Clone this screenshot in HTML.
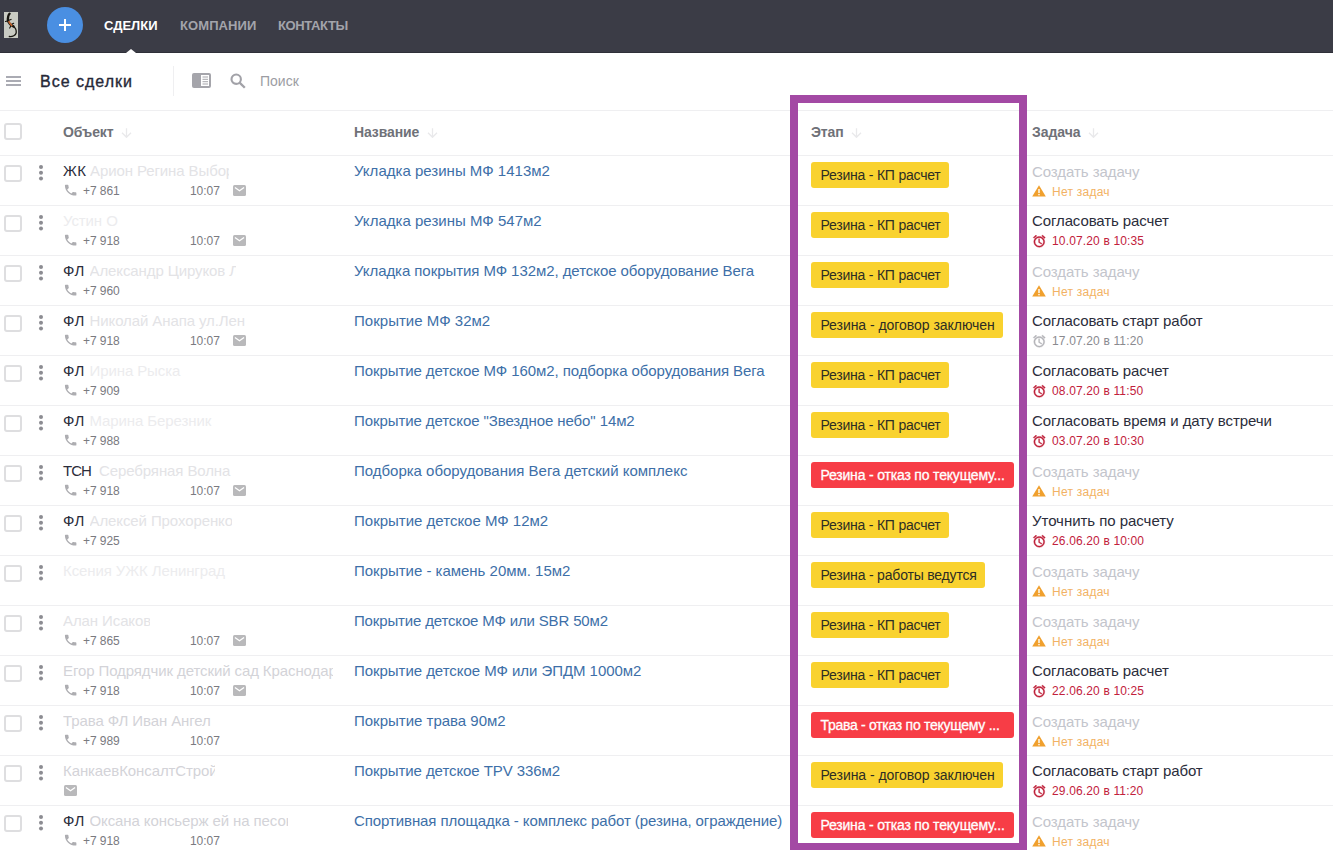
<!DOCTYPE html>
<html lang="ru"><head><meta charset="utf-8"><title>Все сделки</title>
<style>
html,body{margin:0;padding:0;background:#fff}
body{width:1333px;height:854px;position:relative;overflow:hidden;font-family:"Liberation Sans", sans-serif;color:#2b2d3b}
.t{position:absolute;white-space:nowrap;line-height:20px}
.ic{position:absolute;display:block}
.s12{font-size:12px}.s13{font-size:13px}.s14{font-size:14px}.s15{font-size:15px}.s16{font-size:16px}
.b{font-weight:bold}
.topbar{position:absolute;left:0;top:0;width:1333px;height:52px;background:#3b3c46;border-bottom:1px solid #2f3039}
.plus{position:absolute;left:47px;top:7px;width:36px;height:36px;border-radius:50%;background:#4a8fe2}
.plus:before{content:"";position:absolute;left:11.800px;top:17.100px;width:12px;height:2.200px;background:#fff}
.plus:after{content:"";position:absolute;left:16.700px;top:12.200px;width:2.200px;height:12px;background:#fff}
.tri{position:absolute;left:125.500px;top:48.700px;width:0;height:0;border-left:5.500px solid transparent;border-right:5.500px solid transparent;border-bottom:4.300px solid #fff}
.nav{color:#a3a4ab;font-weight:bold}
.nav.act{color:#fff}
.hl{position:absolute;left:0;width:1333px;height:1px;background:#efeff1}
.cb{position:absolute;left:4px;width:13.500px;height:13.300px;border:2px solid #dedee0;border-radius:3px;background:#fff}
.dots{position:absolute;left:39.100px;width:4.300px;height:4.300px;border-radius:50%;background:#8c8c92;box-shadow:0 5.800px 0 #8c8c92,0 11.600px 0 #8c8c92}
.th{color:#6f7178;font-weight:bold;letter-spacing:-0.25px}
.nm{color:#2b2d3b;letter-spacing:-0.2px}
.sm{color:#e3e3e6;letter-spacing:-0.1px;overflow:hidden}
.sm.f{color:#ececee}.sm.g{color:#d3d3d8}
.ph{color:#7a7a7f;letter-spacing:-0.050px}
.lnk{color:#3d6fa8;letter-spacing:-0.05px}
.bd{position:absolute;left:811px;height:26px;border-radius:3px;box-sizing:border-box;padding:0 9px 0 9.400px;font-size:14px;line-height:26px;white-space:nowrap;overflow:hidden;letter-spacing:-0.25px}
.bd.y{background:#f9d22f;color:#2d2d24}
.bd.r{background:#f73d46;color:#fff;-webkit-text-stroke:0.300px #fff}
.tk{color:#2b2d3b;letter-spacing:-0.15px}
.tk0{color:#c3c5cc;letter-spacing:-0.13px}
.no{color:#f2b264;letter-spacing:0.250px}
.dr{color:#c2213c;letter-spacing:0.150px}
.dg{color:#8a8a8f;letter-spacing:0.150px}
.frame{position:absolute;left:790px;top:95px;width:221px;height:740px;border:8px solid #a349a4;border-bottom-width:7.600px}
</style></head><body>
<div class="topbar"></div>
<svg class="ic" style="left:3.900px;top:11.900px" width="14.200" height="26.100" viewBox="0 0 14.200 26.100"><rect width="14.200" height="26.100" fill="#c9cbc3"/><path d="M5.600 1.600 C4.300 2.600 4 5 3.800 7.300 C3.800 9.500 5 11 5.700 11.700 C6.500 12.700 8.300 13.600 9.600 14.500" fill="none" stroke="#17150f" stroke-width="2.300" stroke-linecap="round"/><path d="M9.300 14.300 C11.500 15.800 12.500 18 12.200 20.800 C11.800 23.200 8.500 25 5.300 24.500" fill="none" stroke="#17150f" stroke-width="1.300" stroke-linecap="round"/><path d="M3.600 8.900 L1.500 9.500 M5.300 8.100 L7.100 7.400 M8.100 12.100 L9.700 11.300 M6.700 14.300 L5.700 16.100" stroke="#17150f" stroke-width="1.100" stroke-linecap="round"/><path d="M4.900 9.600 C5.500 11 6.500 12.300 7.800 13.500" fill="none" stroke="#c8642a" stroke-width="1.500" stroke-linecap="round"/></svg>
<div class="plus"></div>

<span class="t s13 nav act" style="left:104px;top:16px;letter-spacing:-0.013px;">СДЕЛКИ</span>
<span class="t s13 nav" style="left:180px;top:16px;letter-spacing:0.087px;">КОМПАНИИ</span>
<span class="t s13 nav" style="left:278px;top:16px;letter-spacing:-0.368px;">КОНТАКТЫ</span>
<div class="tri"></div>
<svg class="ic" style="left:6px;top:76px" width="15" height="10" viewBox="0 0 15 10"><path d="M0 1 H15 M0 5 H15 M0 9 H15" stroke="#8f909a" stroke-width="1.700"/></svg>
<span class="t s16 " style="left:40px;top:72px;letter-spacing:1.0px;color:#262837;-webkit-text-stroke:0.35px #262837">Все сделки</span>
<div style="position:absolute;left:173px;top:66px;width:1px;height:30px;background:#efeff1"></div>
<svg class="ic" style="left:192px;top:73px" width="19" height="15" viewBox="0 0 19 15"><rect width="19" height="15" rx="2" fill="#a5a5ab"/><rect x="9" y="2" width="8" height="11" fill="#fff"/><path d="M10.500 4 H16 M10.500 6.300 H16 M10.500 8.700 H16 M10.500 11 H16" stroke="#a5a5ab" stroke-width="1"/></svg>
<svg class="ic" style="left:230px;top:73px" width="16" height="16" viewBox="0 0 16 16"><circle cx="6.200" cy="6.200" r="4.700" fill="none" stroke="#a2a2a8" stroke-width="2.100"/><path d="M9.600 9.600 L14.800 14.800" stroke="#a2a2a8" stroke-width="2.300"/></svg>
<span class="t s14 " style="left:260px;top:71px;color:#9c9da3">Поиск</span>
<div class="hl" style="top:110px"></div>
<div class="cb" style="top:123px"></div>
<span class="t s14 th" style="left:63px;top:122px;letter-spacing:-0.144px;">Объект</span>
<svg class="ic" style="left:121px;top:128px" width="11" height="10" viewBox="0 0 11 10"><path d="M5.500 0.300 V9 M1 4.800 L5.500 9.300 L10 4.800" fill="none" stroke="#e9e9eb" stroke-width="1.3"/></svg>
<span class="t s14 th" style="left:354px;top:122px;letter-spacing:-0.099px;">Название</span>
<svg class="ic" style="left:427px;top:128px" width="11" height="10" viewBox="0 0 11 10"><path d="M5.500 0.300 V9 M1 4.800 L5.500 9.300 L10 4.800" fill="none" stroke="#e9e9eb" stroke-width="1.3"/></svg>
<span class="t s14 th" style="left:811px;top:122px;letter-spacing:-0.1px;">Этап</span>
<svg class="ic" style="left:851px;top:128px" width="11" height="10" viewBox="0 0 11 10"><path d="M5.500 0.300 V9 M1 4.800 L5.500 9.300 L10 4.800" fill="none" stroke="#e9e9eb" stroke-width="1.3"/></svg>
<span class="t s14 th" style="left:1032px;top:122px;letter-spacing:-0.05px;">Задача</span>
<svg class="ic" style="left:1088px;top:128px" width="11" height="10" viewBox="0 0 11 10"><path d="M5.500 0.300 V9 M1 4.800 L5.500 9.300 L10 4.800" fill="none" stroke="#e9e9eb" stroke-width="1.3"/></svg>
<div class="hl" style="top:155px"></div>
<div class="cb" style="top:164.8px"></div>
<div class="dots" style="top:164.6px"></div>
<span class="t s15 nm" style="left:63px;top:161px;letter-spacing:0.3px;">ЖК</span>
<span class="t s15 sm " style="left:90px;top:161px;width:139px">Арион Регина Выбор</span>
<svg class="ic" style="left:62.7px;top:183.3px" width="15.300" height="14.400" viewBox="0 0 24 24" preserveAspectRatio="none"><path fill="#adadb1" d="M6.62 10.79c1.44 2.83 3.76 5.14 6.59 6.59l2.2-2.2c.27-.27.67-.36 1.02-.24 1.12.37 2.33.57 3.57.57.55 0 1 .45 1 1V20c0 .55-.45 1-1 1C10.610 21 3 13.390 3 4c0-.55.45-1 1-1h3.500c.55 0 1 .45 1 1 0 1.250.200 2.450.570 3.570.110.350.030.740-.250 1.020l-2.200 2.200z"/></svg>
<span class="t s12 ph" style="left:83px;top:181px;">+7 861</span>
<span class="t s12 ph" style="left:190px;top:181px;">10:07</span>
<svg class="ic" style="left:233px;top:185px" width="13" height="11" viewBox="0 0 13 11"><rect width="13" height="11" rx="1.5" fill="#b9b9bb"/><path d="M1.900 2.500 L6.500 5.700 L11.100 2.500" fill="none" stroke="#fff" stroke-width="1.3"/></svg>
<span class="t s15 lnk" style="left:354px;top:161px;letter-spacing:0.013px;">Укладка резины МФ 1413м2</span>
<div class="bd y" style="top:162px;width:138px;letter-spacing:-0.209px">Резина - КП расчет</div>
<span class="t s15 tk0" style="left:1032px;top:162px;letter-spacing:-0.068px;">Создать задачу</span>
<svg class="ic" style="left:1032.2px;top:184.8px" width="14" height="12" viewBox="0 0 14 12"><path d="M7 0.3 L13.8 11.6 H0.2 Z" fill="#f0a02e"/><rect x="6.3" y="4" width="1.4" height="4" fill="#fff"/><rect x="6.3" y="8.9" width="1.4" height="1.4" fill="#fff"/></svg>
<span class="t s12 no" style="left:1052px;top:182px;">Нет задач</span>
<div class="hl" style="top:205px"></div>
<div class="cb" style="top:214.8px"></div>
<div class="dots" style="top:214.6px"></div>
<span class="t s15 sm f" style="left:63px;top:211px;width:55px">Устин О.В.</span>
<svg class="ic" style="left:62.7px;top:233.3px" width="15.300" height="14.400" viewBox="0 0 24 24" preserveAspectRatio="none"><path fill="#adadb1" d="M6.62 10.79c1.44 2.83 3.76 5.14 6.59 6.59l2.2-2.2c.27-.27.67-.36 1.02-.24 1.12.37 2.33.57 3.57.57.55 0 1 .45 1 1V20c0 .55-.45 1-1 1C10.610 21 3 13.390 3 4c0-.55.45-1 1-1h3.500c.55 0 1 .45 1 1 0 1.250.200 2.450.570 3.570.110.350.030.740-.250 1.020l-2.200 2.200z"/></svg>
<span class="t s12 ph" style="left:83px;top:231px;">+7 918</span>
<span class="t s12 ph" style="left:190px;top:231px;">10:07</span>
<svg class="ic" style="left:233px;top:235px" width="13" height="11" viewBox="0 0 13 11"><rect width="13" height="11" rx="1.5" fill="#b9b9bb"/><path d="M1.900 2.500 L6.500 5.700 L11.100 2.500" fill="none" stroke="#fff" stroke-width="1.3"/></svg>
<span class="t s15 lnk" style="left:354px;top:211px;letter-spacing:0.02px;">Укладка резины МФ 547м2</span>
<div class="bd y" style="top:212px;width:138px;letter-spacing:-0.209px">Резина - КП расчет</div>
<span class="t s15 tk" style="left:1032px;top:211px;letter-spacing:-0.108px;">Согласовать расчет</span>
<svg class="ic" style="left:1031.8px;top:233.8px" width="14.500" height="14.500" viewBox="0 0 24 24"><path fill="#be2039" stroke="#be2039" stroke-width="0.600" d="M22 5.720l-4.600-3.860-1.290 1.530 4.600 3.860L22 5.720zM7.880 3.390L6.600 1.860 2 5.710l1.290 1.530 4.590-3.850zM12.500 8H11v6l4.750 2.850.750-1.230-4-2.370V8zM12 4c-4.970 0-9 4.030-9 9s4.020 9 9 9c4.970 0 9-4.030 9-9s-4.030-9-9-9zm0 16c-3.870 0-7-3.130-7-7s3.130-7 7-7 7 3.130 7 7-3.130 7-7 7z"/></svg>
<span class="t s12 dr" style="left:1052px;top:231px;">10.07.20 в 10:35</span>
<div class="hl" style="top:255px"></div>
<div class="cb" style="top:264.8px"></div>
<div class="dots" style="top:264.6px"></div>
<span class="t s15 nm" style="left:63px;top:261px;letter-spacing:0.7px;">ФЛ</span>
<span class="t s15 sm " style="left:89.5px;top:261px;width:146.5px">Александр Цируков Л</span>
<svg class="ic" style="left:62.7px;top:283.3px" width="15.300" height="14.400" viewBox="0 0 24 24" preserveAspectRatio="none"><path fill="#adadb1" d="M6.62 10.79c1.44 2.83 3.76 5.14 6.59 6.59l2.2-2.2c.27-.27.67-.36 1.02-.24 1.12.37 2.33.57 3.57.57.55 0 1 .45 1 1V20c0 .55-.45 1-1 1C10.610 21 3 13.390 3 4c0-.55.45-1 1-1h3.500c.55 0 1 .45 1 1 0 1.250.200 2.450.570 3.570.110.350.030.740-.250 1.020l-2.200 2.200z"/></svg>
<span class="t s12 ph" style="left:83px;top:281px;">+7 960</span>
<span class="t s15 lnk" style="left:354px;top:261px;letter-spacing:-0.065px;">Укладка покрытия МФ 132м2, детское оборудование Вега</span>
<div class="bd y" style="top:262px;width:138px;letter-spacing:-0.209px">Резина - КП расчет</div>
<span class="t s15 tk0" style="left:1032px;top:262px;letter-spacing:-0.068px;">Создать задачу</span>
<svg class="ic" style="left:1032.2px;top:284.8px" width="14" height="12" viewBox="0 0 14 12"><path d="M7 0.3 L13.8 11.6 H0.2 Z" fill="#f0a02e"/><rect x="6.3" y="4" width="1.4" height="4" fill="#fff"/><rect x="6.3" y="8.9" width="1.4" height="1.4" fill="#fff"/></svg>
<span class="t s12 no" style="left:1052px;top:282px;">Нет задач</span>
<div class="hl" style="top:305px"></div>
<div class="cb" style="top:314.8px"></div>
<div class="dots" style="top:314.6px"></div>
<span class="t s15 nm" style="left:63px;top:311px;letter-spacing:0.7px;">ФЛ</span>
<span class="t s15 sm " style="left:89.5px;top:311px;width:160.5px">Николай Анапа ул.Лен</span>
<svg class="ic" style="left:62.7px;top:333.3px" width="15.300" height="14.400" viewBox="0 0 24 24" preserveAspectRatio="none"><path fill="#adadb1" d="M6.62 10.79c1.44 2.83 3.76 5.14 6.59 6.59l2.2-2.2c.27-.27.67-.36 1.02-.24 1.12.37 2.33.57 3.57.57.55 0 1 .45 1 1V20c0 .55-.45 1-1 1C10.610 21 3 13.390 3 4c0-.55.45-1 1-1h3.500c.55 0 1 .45 1 1 0 1.250.200 2.450.570 3.570.110.350.030.740-.250 1.020l-2.200 2.200z"/></svg>
<span class="t s12 ph" style="left:83px;top:331px;">+7 918</span>
<span class="t s12 ph" style="left:190px;top:331px;">10:07</span>
<svg class="ic" style="left:233px;top:335px" width="13" height="11" viewBox="0 0 13 11"><rect width="13" height="11" rx="1.5" fill="#b9b9bb"/><path d="M1.900 2.500 L6.500 5.700 L11.100 2.500" fill="none" stroke="#fff" stroke-width="1.3"/></svg>
<span class="t s15 lnk" style="left:354px;top:311px;letter-spacing:0.026px;">Покрытие МФ 32м2</span>
<div class="bd y" style="top:312px;width:192px;letter-spacing:-0.039px">Резина - договор заключен</div>
<span class="t s15 tk" style="left:1032px;top:311px;letter-spacing:-0.143px;">Согласовать старт работ</span>
<svg class="ic" style="left:1031.8px;top:333.8px" width="14.500" height="14.500" viewBox="0 0 24 24"><path fill="#b4b4b8" stroke="#b4b4b8" stroke-width="0.600" d="M22 5.720l-4.600-3.860-1.290 1.530 4.600 3.860L22 5.720zM7.880 3.390L6.600 1.860 2 5.710l1.290 1.530 4.590-3.850zM12.500 8H11v6l4.750 2.850.750-1.230-4-2.370V8zM12 4c-4.970 0-9 4.030-9 9s4.020 9 9 9c4.970 0 9-4.030 9-9s-4.030-9-9-9zm0 16c-3.870 0-7-3.130-7-7s3.130-7 7-7 7 3.130 7 7-3.130 7-7 7z"/></svg>
<span class="t s12 dg" style="left:1052px;top:331px;">17.07.20 в 11:20</span>
<div class="hl" style="top:355px"></div>
<div class="cb" style="top:364.8px"></div>
<div class="dots" style="top:364.6px"></div>
<span class="t s15 nm" style="left:63px;top:361px;letter-spacing:0.7px;">ФЛ</span>
<span class="t s15 sm f" style="left:89.5px;top:361px;width:93.5px">Ирина Рыска</span>
<svg class="ic" style="left:62.7px;top:383.3px" width="15.300" height="14.400" viewBox="0 0 24 24" preserveAspectRatio="none"><path fill="#adadb1" d="M6.62 10.79c1.44 2.83 3.76 5.14 6.59 6.59l2.2-2.2c.27-.27.67-.36 1.02-.24 1.12.37 2.33.57 3.57.57.55 0 1 .45 1 1V20c0 .55-.45 1-1 1C10.610 21 3 13.390 3 4c0-.55.45-1 1-1h3.500c.55 0 1 .45 1 1 0 1.250.200 2.450.570 3.570.110.350.030.740-.250 1.020l-2.200 2.200z"/></svg>
<span class="t s12 ph" style="left:83px;top:381px;">+7 909</span>
<span class="t s15 lnk" style="left:354px;top:361px;letter-spacing:-0.081px;">Покрытие детское МФ 160м2, подборка оборудования Вега</span>
<div class="bd y" style="top:362px;width:138px;letter-spacing:-0.209px">Резина - КП расчет</div>
<span class="t s15 tk" style="left:1032px;top:361px;letter-spacing:-0.108px;">Согласовать расчет</span>
<svg class="ic" style="left:1031.8px;top:383.8px" width="14.500" height="14.500" viewBox="0 0 24 24"><path fill="#be2039" stroke="#be2039" stroke-width="0.600" d="M22 5.720l-4.600-3.860-1.290 1.530 4.600 3.860L22 5.720zM7.880 3.390L6.600 1.860 2 5.710l1.290 1.530 4.590-3.850zM12.500 8H11v6l4.750 2.850.750-1.230-4-2.370V8zM12 4c-4.970 0-9 4.030-9 9s4.020 9 9 9c4.970 0 9-4.030 9-9s-4.030-9-9-9zm0 16c-3.870 0-7-3.130-7-7s3.130-7 7-7 7 3.130 7 7-3.130 7-7 7z"/></svg>
<span class="t s12 dr" style="left:1052px;top:381px;">08.07.20 в 11:50</span>
<div class="hl" style="top:405px"></div>
<div class="cb" style="top:414.8px"></div>
<div class="dots" style="top:414.6px"></div>
<span class="t s15 nm" style="left:63px;top:411px;letter-spacing:0.7px;">ФЛ</span>
<span class="t s15 sm f" style="left:89.5px;top:411px;width:130.5px">Марина Березник</span>
<svg class="ic" style="left:62.7px;top:433.3px" width="15.300" height="14.400" viewBox="0 0 24 24" preserveAspectRatio="none"><path fill="#adadb1" d="M6.62 10.79c1.44 2.83 3.76 5.14 6.59 6.59l2.2-2.2c.27-.27.67-.36 1.02-.24 1.12.37 2.33.57 3.57.57.55 0 1 .45 1 1V20c0 .55-.45 1-1 1C10.610 21 3 13.390 3 4c0-.55.45-1 1-1h3.500c.55 0 1 .45 1 1 0 1.250.200 2.450.570 3.570.110.350.030.740-.250 1.020l-2.200 2.200z"/></svg>
<span class="t s12 ph" style="left:83px;top:431px;">+7 988</span>
<span class="t s15 lnk" style="left:354px;top:411px;letter-spacing:-0.086px;">Покрытие детское "Звездное небо" 14м2</span>
<div class="bd y" style="top:412px;width:138px;letter-spacing:-0.209px">Резина - КП расчет</div>
<span class="t s15 tk" style="left:1032px;top:411px;letter-spacing:-0.062px;">Согласовать время и дату встречи</span>
<svg class="ic" style="left:1031.8px;top:433.8px" width="14.500" height="14.500" viewBox="0 0 24 24"><path fill="#be2039" stroke="#be2039" stroke-width="0.600" d="M22 5.720l-4.600-3.860-1.290 1.530 4.600 3.860L22 5.720zM7.880 3.390L6.600 1.860 2 5.710l1.290 1.530 4.590-3.850zM12.500 8H11v6l4.750 2.850.750-1.230-4-2.370V8zM12 4c-4.970 0-9 4.030-9 9s4.020 9 9 9c4.970 0 9-4.030 9-9s-4.030-9-9-9zm0 16c-3.870 0-7-3.130-7-7s3.130-7 7-7 7 3.130 7 7-3.130 7-7 7z"/></svg>
<span class="t s12 dr" style="left:1052px;top:431px;">03.07.20 в 10:30</span>
<div class="hl" style="top:455px"></div>
<div class="cb" style="top:464.8px"></div>
<div class="dots" style="top:464.6px"></div>
<span class="t s15 nm" style="left:63px;top:461px;letter-spacing:-1.0px;">ТСН</span>
<span class="t s15 sm " style="left:99px;top:461px;width:141px">Серебряная Волна</span>
<svg class="ic" style="left:62.7px;top:483.3px" width="15.300" height="14.400" viewBox="0 0 24 24" preserveAspectRatio="none"><path fill="#adadb1" d="M6.62 10.79c1.44 2.83 3.76 5.14 6.59 6.59l2.2-2.2c.27-.27.67-.36 1.02-.24 1.12.37 2.33.57 3.57.57.55 0 1 .45 1 1V20c0 .55-.45 1-1 1C10.610 21 3 13.390 3 4c0-.55.45-1 1-1h3.500c.55 0 1 .45 1 1 0 1.250.200 2.450.570 3.570.110.350.030.740-.250 1.020l-2.200 2.200z"/></svg>
<span class="t s12 ph" style="left:83px;top:481px;">+7 918</span>
<span class="t s12 ph" style="left:190px;top:481px;">10:07</span>
<svg class="ic" style="left:233px;top:485px" width="13" height="11" viewBox="0 0 13 11"><rect width="13" height="11" rx="1.5" fill="#b9b9bb"/><path d="M1.900 2.500 L6.500 5.700 L11.100 2.500" fill="none" stroke="#fff" stroke-width="1.3"/></svg>
<span class="t s15 lnk" style="left:354px;top:461px;letter-spacing:-0.014px;">Подборка оборудования Вега детский комплекс</span>
<div class="bd r" style="top:462px;width:203px;letter-spacing:-0.18px">Резина - отказ по текущему...</div>
<span class="t s15 tk0" style="left:1032px;top:462px;letter-spacing:-0.068px;">Создать задачу</span>
<svg class="ic" style="left:1032.2px;top:484.8px" width="14" height="12" viewBox="0 0 14 12"><path d="M7 0.3 L13.8 11.6 H0.2 Z" fill="#f0a02e"/><rect x="6.3" y="4" width="1.4" height="4" fill="#fff"/><rect x="6.3" y="8.9" width="1.4" height="1.4" fill="#fff"/></svg>
<span class="t s12 no" style="left:1052px;top:482px;">Нет задач</span>
<div class="hl" style="top:505px"></div>
<div class="cb" style="top:514.8px"></div>
<div class="dots" style="top:514.6px"></div>
<span class="t s15 nm" style="left:63px;top:511px;letter-spacing:0.7px;">ФЛ</span>
<span class="t s15 sm " style="left:89.5px;top:511px;width:142.5px">Алексей Прохоренко</span>
<svg class="ic" style="left:62.7px;top:533.3px" width="15.300" height="14.400" viewBox="0 0 24 24" preserveAspectRatio="none"><path fill="#adadb1" d="M6.62 10.79c1.44 2.83 3.76 5.14 6.59 6.59l2.2-2.2c.27-.27.67-.36 1.02-.24 1.12.37 2.33.57 3.57.57.55 0 1 .45 1 1V20c0 .55-.45 1-1 1C10.610 21 3 13.390 3 4c0-.55.45-1 1-1h3.500c.55 0 1 .45 1 1 0 1.250.200 2.450.570 3.570.110.350.030.740-.250 1.020l-2.200 2.200z"/></svg>
<span class="t s12 ph" style="left:83px;top:531px;">+7 925</span>
<span class="t s15 lnk" style="left:354px;top:511px;letter-spacing:0.001px;">Покрытие детское МФ 12м2</span>
<div class="bd y" style="top:512px;width:138px;letter-spacing:-0.209px">Резина - КП расчет</div>
<span class="t s15 tk" style="left:1032px;top:511px;letter-spacing:-0.04px;">Уточнить по расчету</span>
<svg class="ic" style="left:1031.8px;top:533.8px" width="14.500" height="14.500" viewBox="0 0 24 24"><path fill="#be2039" stroke="#be2039" stroke-width="0.600" d="M22 5.720l-4.600-3.860-1.290 1.530 4.600 3.860L22 5.720zM7.880 3.390L6.600 1.860 2 5.710l1.290 1.530 4.590-3.850zM12.500 8H11v6l4.750 2.850.750-1.230-4-2.370V8zM12 4c-4.970 0-9 4.030-9 9s4.020 9 9 9c4.970 0 9-4.030 9-9s-4.030-9-9-9zm0 16c-3.870 0-7-3.130-7-7s3.130-7 7-7 7 3.130 7 7-3.130 7-7 7z"/></svg>
<span class="t s12 dr" style="left:1052px;top:531px;">26.06.20 в 10:00</span>
<div class="hl" style="top:555px"></div>
<div class="cb" style="top:564.8px"></div>
<div class="dots" style="top:564.6px"></div>
<span class="t s15 sm f" style="left:63px;top:561px;width:166px">Ксения УЖК Ленинград</span>
<span class="t s15 lnk" style="left:354px;top:561px;letter-spacing:-0.018px;">Покрытие - камень 20мм. 15м2</span>
<div class="bd y" style="top:562px;width:174px;letter-spacing:-0.187px">Резина - работы ведутся</div>
<span class="t s15 tk0" style="left:1032px;top:562px;letter-spacing:-0.068px;">Создать задачу</span>
<svg class="ic" style="left:1032.2px;top:584.8px" width="14" height="12" viewBox="0 0 14 12"><path d="M7 0.3 L13.8 11.6 H0.2 Z" fill="#f0a02e"/><rect x="6.3" y="4" width="1.4" height="4" fill="#fff"/><rect x="6.3" y="8.9" width="1.4" height="1.4" fill="#fff"/></svg>
<span class="t s12 no" style="left:1052px;top:582px;">Нет задач</span>
<div class="hl" style="top:605px"></div>
<div class="cb" style="top:614.8px"></div>
<div class="dots" style="top:614.6px"></div>
<span class="t s15 sm " style="left:63px;top:611px;width:87px">Алан Исаков</span>
<svg class="ic" style="left:62.7px;top:633.3px" width="15.300" height="14.400" viewBox="0 0 24 24" preserveAspectRatio="none"><path fill="#adadb1" d="M6.62 10.79c1.44 2.83 3.76 5.14 6.59 6.59l2.2-2.2c.27-.27.67-.36 1.02-.24 1.12.37 2.33.57 3.57.57.55 0 1 .45 1 1V20c0 .55-.45 1-1 1C10.610 21 3 13.390 3 4c0-.55.45-1 1-1h3.500c.55 0 1 .45 1 1 0 1.250.200 2.450.570 3.570.110.350.030.740-.250 1.020l-2.200 2.200z"/></svg>
<span class="t s12 ph" style="left:83px;top:631px;">+7 865</span>
<span class="t s12 ph" style="left:190px;top:631px;">10:07</span>
<svg class="ic" style="left:233px;top:635px" width="13" height="11" viewBox="0 0 13 11"><rect width="13" height="11" rx="1.5" fill="#b9b9bb"/><path d="M1.900 2.500 L6.500 5.700 L11.100 2.500" fill="none" stroke="#fff" stroke-width="1.3"/></svg>
<span class="t s15 lnk" style="left:354px;top:611px;letter-spacing:-0.157px;">Покрытие детское МФ или SBR 50м2</span>
<div class="bd y" style="top:612px;width:138px;letter-spacing:-0.209px">Резина - КП расчет</div>
<span class="t s15 tk0" style="left:1032px;top:612px;letter-spacing:-0.068px;">Создать задачу</span>
<svg class="ic" style="left:1032.2px;top:634.8px" width="14" height="12" viewBox="0 0 14 12"><path d="M7 0.3 L13.8 11.6 H0.2 Z" fill="#f0a02e"/><rect x="6.3" y="4" width="1.4" height="4" fill="#fff"/><rect x="6.3" y="8.9" width="1.4" height="1.4" fill="#fff"/></svg>
<span class="t s12 no" style="left:1052px;top:632px;">Нет задач</span>
<div class="hl" style="top:655px"></div>
<div class="cb" style="top:664.8px"></div>
<div class="dots" style="top:664.6px"></div>
<span class="t s15 sm g" style="left:63px;top:661px;width:270px">Егор Подрядчик детский сад Краснодар</span>
<svg class="ic" style="left:62.7px;top:683.3px" width="15.300" height="14.400" viewBox="0 0 24 24" preserveAspectRatio="none"><path fill="#adadb1" d="M6.62 10.79c1.44 2.83 3.76 5.14 6.59 6.59l2.2-2.2c.27-.27.67-.36 1.02-.24 1.12.37 2.33.57 3.57.57.55 0 1 .45 1 1V20c0 .55-.45 1-1 1C10.610 21 3 13.390 3 4c0-.55.45-1 1-1h3.500c.55 0 1 .45 1 1 0 1.250.200 2.450.570 3.570.110.350.030.740-.250 1.020l-2.200 2.200z"/></svg>
<span class="t s12 ph" style="left:83px;top:681px;">+7 918</span>
<span class="t s12 ph" style="left:190px;top:681px;">10:07</span>
<svg class="ic" style="left:233px;top:685px" width="13" height="11" viewBox="0 0 13 11"><rect width="13" height="11" rx="1.5" fill="#b9b9bb"/><path d="M1.900 2.500 L6.500 5.700 L11.100 2.500" fill="none" stroke="#fff" stroke-width="1.3"/></svg>
<span class="t s15 lnk" style="left:354px;top:661px;letter-spacing:-0.045px;">Покрытие детское МФ или ЭПДМ 1000м2</span>
<div class="bd y" style="top:662px;width:138px;letter-spacing:-0.209px">Резина - КП расчет</div>
<span class="t s15 tk" style="left:1032px;top:661px;letter-spacing:-0.108px;">Согласовать расчет</span>
<svg class="ic" style="left:1031.8px;top:683.8px" width="14.500" height="14.500" viewBox="0 0 24 24"><path fill="#be2039" stroke="#be2039" stroke-width="0.600" d="M22 5.720l-4.600-3.860-1.290 1.530 4.600 3.860L22 5.720zM7.880 3.390L6.600 1.860 2 5.710l1.290 1.530 4.590-3.850zM12.500 8H11v6l4.750 2.850.750-1.230-4-2.370V8zM12 4c-4.970 0-9 4.030-9 9s4.020 9 9 9c4.970 0 9-4.030 9-9s-4.030-9-9-9zm0 16c-3.870 0-7-3.130-7-7s3.130-7 7-7 7 3.130 7 7-3.130 7-7 7z"/></svg>
<span class="t s12 dr" style="left:1052px;top:681px;">22.06.20 в 10:25</span>
<div class="hl" style="top:705px"></div>
<div class="cb" style="top:714.8px"></div>
<div class="dots" style="top:714.6px"></div>
<span class="t s15 sm g" style="left:63px;top:711px;width:150px">Трава ФЛ Иван Ангел</span>
<svg class="ic" style="left:62.7px;top:733.3px" width="15.300" height="14.400" viewBox="0 0 24 24" preserveAspectRatio="none"><path fill="#adadb1" d="M6.62 10.79c1.44 2.83 3.76 5.14 6.59 6.59l2.2-2.2c.27-.27.67-.36 1.02-.24 1.12.37 2.33.57 3.57.57.55 0 1 .45 1 1V20c0 .55-.45 1-1 1C10.610 21 3 13.390 3 4c0-.55.45-1 1-1h3.500c.55 0 1 .45 1 1 0 1.250.200 2.450.570 3.570.110.350.030.740-.250 1.020l-2.200 2.200z"/></svg>
<span class="t s12 ph" style="left:83px;top:731px;">+7 989</span>
<span class="t s12 ph" style="left:190px;top:731px;">10:07</span>
<span class="t s15 lnk" style="left:354px;top:711px;letter-spacing:-0.005px;">Покрытие трава 90м2</span>
<div class="bd r" style="top:712px;width:203px;letter-spacing:-0.278px">Трава - отказ по текущему ...</div>
<span class="t s15 tk0" style="left:1032px;top:712px;letter-spacing:-0.068px;">Создать задачу</span>
<svg class="ic" style="left:1032.2px;top:734.8px" width="14" height="12" viewBox="0 0 14 12"><path d="M7 0.3 L13.8 11.6 H0.2 Z" fill="#f0a02e"/><rect x="6.3" y="4" width="1.4" height="4" fill="#fff"/><rect x="6.3" y="8.9" width="1.4" height="1.4" fill="#fff"/></svg>
<span class="t s12 no" style="left:1052px;top:732px;">Нет задач</span>
<div class="hl" style="top:755px"></div>
<div class="cb" style="top:764.8px"></div>
<div class="dots" style="top:764.6px"></div>
<span class="t s15 sm g" style="left:63px;top:761px;width:152px">КанкаевКонсалтСтрой</span>
<svg class="ic" style="left:64px;top:785px" width="13" height="11" viewBox="0 0 13 11"><rect width="13" height="11" rx="1.5" fill="#b9b9bb"/><path d="M1.900 2.500 L6.500 5.700 L11.100 2.500" fill="none" stroke="#fff" stroke-width="1.3"/></svg>
<span class="t s15 lnk" style="left:354px;top:761px;letter-spacing:-0.071px;">Покрытие детское TPV 336м2</span>
<div class="bd y" style="top:762px;width:192px;letter-spacing:-0.039px">Резина - договор заключен</div>
<span class="t s15 tk" style="left:1032px;top:761px;letter-spacing:-0.143px;">Согласовать старт работ</span>
<svg class="ic" style="left:1031.8px;top:783.8px" width="14.500" height="14.500" viewBox="0 0 24 24"><path fill="#be2039" stroke="#be2039" stroke-width="0.600" d="M22 5.720l-4.600-3.860-1.290 1.530 4.600 3.860L22 5.720zM7.880 3.390L6.600 1.860 2 5.710l1.290 1.530 4.590-3.850zM12.500 8H11v6l4.750 2.850.750-1.230-4-2.370V8zM12 4c-4.970 0-9 4.030-9 9s4.020 9 9 9c4.970 0 9-4.030 9-9s-4.030-9-9-9zm0 16c-3.870 0-7-3.130-7-7s3.130-7 7-7 7 3.130 7 7-3.130 7-7 7z"/></svg>
<span class="t s12 dr" style="left:1052px;top:781px;">29.06.20 в 11:20</span>
<div class="hl" style="top:805px"></div>
<div class="cb" style="top:814.8px"></div>
<div class="dots" style="top:814.6px"></div>
<span class="t s15 nm" style="left:63px;top:811px;letter-spacing:0.7px;">ФЛ</span>
<span class="t s15 sm g" style="left:89.5px;top:811px;width:198.5px">Оксана консьерж ей на песок</span>
<svg class="ic" style="left:62.7px;top:833.3px" width="15.300" height="14.400" viewBox="0 0 24 24" preserveAspectRatio="none"><path fill="#adadb1" d="M6.62 10.79c1.44 2.83 3.76 5.14 6.59 6.59l2.2-2.2c.27-.27.67-.36 1.02-.24 1.12.37 2.33.57 3.57.57.55 0 1 .45 1 1V20c0 .55-.45 1-1 1C10.610 21 3 13.390 3 4c0-.55.45-1 1-1h3.500c.55 0 1 .45 1 1 0 1.250.200 2.450.570 3.570.110.350.030.740-.250 1.020l-2.200 2.200z"/></svg>
<span class="t s12 ph" style="left:83px;top:831px;">+7 918</span>
<span class="t s12 ph" style="left:190px;top:831px;">10:07</span>
<span class="t s15 lnk" style="left:354px;top:811px;letter-spacing:-0.09px;">Спортивная площадка - комплекс работ (резина, ограждение)</span>
<div class="bd r" style="top:812px;width:203px;letter-spacing:-0.18px">Резина - отказ по текущему...</div>
<span class="t s15 tk0" style="left:1032px;top:812px;letter-spacing:-0.068px;">Создать задачу</span>
<svg class="ic" style="left:1032.2px;top:834.8px" width="14" height="12" viewBox="0 0 14 12"><path d="M7 0.3 L13.8 11.6 H0.2 Z" fill="#f0a02e"/><rect x="6.3" y="4" width="1.4" height="4" fill="#fff"/><rect x="6.3" y="8.9" width="1.4" height="1.4" fill="#fff"/></svg>
<span class="t s12 no" style="left:1052px;top:832px;">Нет задач</span>
<div class="hl" style="top:855px"></div>
<div class="frame"></div>
</body></html>
